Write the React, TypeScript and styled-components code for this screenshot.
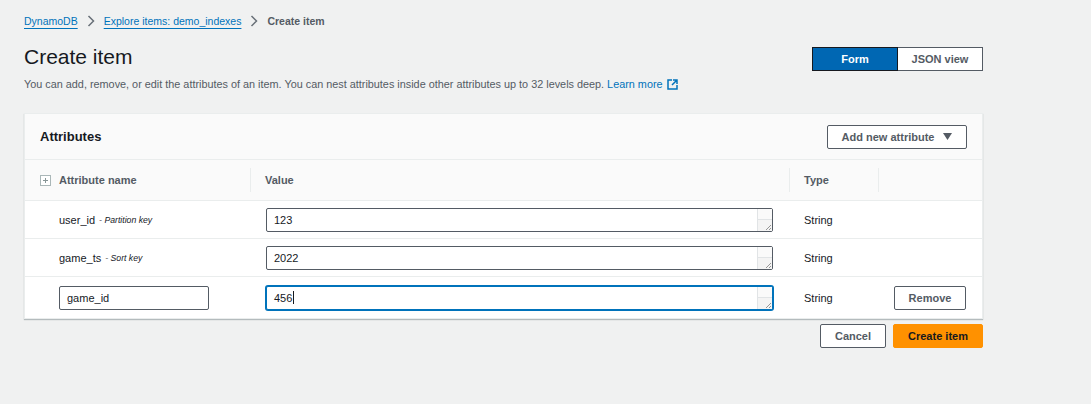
import React from "react";
import styled, { createGlobalStyle } from "styled-components";

const GlobalStyle = createGlobalStyle`
  html, body { margin: 0; padding: 0; }
  body {
    background: #f0f1f1;
    font-family: "Liberation Sans", Arial, sans-serif;
    color: #16191f;
  }
  * { box-sizing: border-box; }
`;

const Page = styled.div`
  width: 983px;
  padding: 13px 0 0 24px;
`;

const Crumbs = styled.nav`
  display: flex;
  align-items: center;
  gap: 9px;
  font-size: 10.5px;
  height: 16px;
`;

const CrumbLink = styled.a`
  color: #0073bb;
  text-decoration: underline;
  text-underline-offset: 3px;
`;

const CrumbCurrent = styled.span`
  color: #545b64;
  font-weight: 700;
`;

const Chevron = () => (
  <svg width="8" height="12" viewBox="0 0 8 12">
    <path d="M1.5 1 L6.5 6 L1.5 11" fill="none" stroke="#687078" strokeWidth="1.5" />
  </svg>
);

const HeaderRow = styled.div`
  display: flex;
  justify-content: space-between;
  align-items: flex-start;
  margin-top: 14px;
`;

const TitleBlock = styled.div`
  display: flex;
  flex-direction: column;
`;

const Title = styled.h1`
  margin: 0;
  font-size: 21px;
  font-weight: 400;
  line-height: 28px;
  color: #16191f;
`;

const Description = styled.p`
  margin: 7px 0 0;
  font-size: 10.85px;
  color: #545b64;
  display: flex;
  align-items: center;
  gap: 3px;
`;

const LearnLink = styled.a`
  color: #0073bb;
  display: inline-flex;
  align-items: center;
  gap: 4px;
`;

const Segmented = styled.div`
  display: flex;
  margin-top: 4px;
`;

const SegButton = styled.button<{ $active?: boolean }>`
  width: ${(p) => (p.$active ? "86px" : "85px")};
  height: 24px;
  font-family: inherit;
  font-size: 11px;
  font-weight: 700;
  border: 1px solid ${(p) => (p.$active ? "#16191f" : "#545b64")};
  ${(p) => (!p.$active ? "border-left: none;" : "")}
  background: ${(p) => (p.$active ? "#0067b3" : "#ffffff")};
  color: ${(p) => (p.$active ? "#ffffff" : "#545b64")};
  padding: 0;
`;

const Panel = styled.section`
  margin-top: 23px;
  background: #ffffff;
  border: 1px solid #eaeded;
  box-shadow: 0 1px 1px rgba(0, 28, 36, 0.25);
`;

const PanelHeader = styled.div`
  display: flex;
  align-items: center;
  justify-content: space-between;
  height: 46px;
  padding: 0 15px;
  background: #fafafa;
  border-bottom: 1px solid #eaeded;
`;

const PanelTitle = styled.h2`
  margin: 0;
  font-size: 13px;
  font-weight: 700;
  color: #16191f;
`;

const OutlineButton = styled.button<{ $w: number }>`
  width: ${(p) => p.$w}px;
  height: 24px;
  background: #ffffff;
  border: 1px solid #545b64;
  border-radius: 2px;
  font-family: inherit;
  font-size: 11px;
  font-weight: 700;
  color: #545b64;
  display: inline-flex;
  align-items: center;
  justify-content: center;
  gap: 9px;
  padding: 0;
`;

const PrimaryButton = styled.button`
  width: 90px;
  height: 24px;
  background: #ff9100;
  border: 1px solid #ff9100;
  border-radius: 2px;
  font-family: inherit;
  font-size: 11px;
  font-weight: 700;
  color: #16191f;
  padding: 0;
`;

const Table = styled.div`
  display: grid;
  grid-template-columns: 225px 539px 89px 1fr;
`;

const HeadCell = styled.div<{ $divider?: boolean; $pad?: number }>`
  height: 41px;
  background: #fafafa;
  border-bottom: 1px solid #eaeded;
  display: flex;
  align-items: center;
  gap: 8px;
  padding-left: ${(p) => p.$pad ?? 15}px;
  font-size: 11px;
  font-weight: 700;
  color: #545b64;
  position: relative;
  &::before {
    content: "";
    display: ${(p) => (p.$divider ? "block" : "none")};
    position: absolute;
    left: 0;
    top: 8px;
    bottom: 8px;
    width: 1px;
    background: #eaeded;
  }
`;

const Cell = styled.div<{ $pad?: number; $last?: boolean; $h?: number }>`
  height: ${(p) => p.$h ?? 38}px;
  display: flex;
  align-items: center;
  padding: 0 16px 0 ${(p) => p.$pad ?? 16}px;
  border-bottom: ${(p) => (p.$last ? "none" : "1px solid #eaeded")};
  font-size: 11px;
  color: #16191f;
  gap: 4px;
`;

const KeyHint = styled.span`
  font-size: 8.7px;
  font-style: italic;
  color: #16191f;
`;

const TextBox = styled.div<{ $focus?: boolean }>`
  flex: 1;
  height: 24px;
  display: flex;
  border: 1px solid ${(p) => (p.$focus ? "#0073bb" : "#545b64")};
  box-shadow: ${(p) => (p.$focus ? "0 0 0 1px #0073bb" : "none")};
  border-radius: 2px;
  background: #ffffff;
`;

const TextValue = styled.div`
  flex: 1;
  padding: 0 7px;
  display: flex;
  align-items: center;
  font-size: 11px;
  color: #16191f;
`;

const Caret = styled.span`
  display: inline-block;
  width: 1px;
  height: 13px;
  background: #16191f;
  margin-left: 1px;
`;

const ScrollTrack = styled.div`
  width: 15px;
  border-left: 1px solid #e1e4e6;
  display: flex;
  flex-direction: column;
  background: #fafafa;
`;

const TrackTop = styled.div`
  height: 11px;
  border-bottom: 1px solid #e1e4e6;
  background: #fafafa;
`;

const TrackBottom = styled.div`
  flex: 1;
  display: flex;
  align-items: flex-end;
  justify-content: flex-end;
  background: #f4f4f4;
`;

const Grip = () => (
  <svg width="8" height="8" viewBox="0 0 8 8">
    <path d="M7 2 L2 7 M7 5 L5 7" stroke="#7d7d7d" strokeWidth="0.8" />
  </svg>
);

const NameInput = styled.div`
  width: 150px;
  height: 24px;
  border: 1px solid #545b64;
  border-radius: 2px;
  display: flex;
  align-items: center;
  padding: 0 7px;
  font-size: 11px;
  color: #16191f;
  background: #fff;
`;

const Footer = styled.div`
  display: flex;
  justify-content: flex-end;
  gap: 7px;
  margin-top: 5px;
`;

const ExpandIcon = () => (
  <svg width="11" height="11" viewBox="0 0 11 11">
    <rect x="0.5" y="0.5" width="10" height="10" fill="#fff" stroke="#aab7b8" />
    <path d="M5.5 3 V8 M3 5.5 H8" stroke="#879596" strokeWidth="1" />
  </svg>
);

const ExternalIcon = () => (
  <svg width="11" height="11" viewBox="0 0 11 11">
    <path d="M5 1 H1 V10 H10 V6" fill="none" stroke="#0073bb" strokeWidth="1.5" />
    <path d="M6 1 H10 V5 M10 1 L5 6" fill="none" stroke="#0073bb" strokeWidth="1.5" />
  </svg>
);

const Caretdown = () => (
  <svg width="9" height="7" viewBox="0 0 9 7">
    <path d="M0 0 H9 L4.5 7 Z" fill="#545b64" />
  </svg>
);

const ValueBox = ({ value, focus }: { value: string; focus?: boolean }) => (
  <TextBox $focus={focus}>
    <TextValue>
      {value}
      {focus && <Caret />}
    </TextValue>
    <ScrollTrack>
      <TrackTop />
      <TrackBottom>
        <Grip />
      </TrackBottom>
    </ScrollTrack>
  </TextBox>
);

export default function App() {
  return (
    <>
      <GlobalStyle />
      <Page>
        <Crumbs>
          <CrumbLink>DynamoDB</CrumbLink>
          <Chevron />
          <CrumbLink>Explore items: demo_indexes</CrumbLink>
          <Chevron />
          <CrumbCurrent>Create item</CrumbCurrent>
        </Crumbs>
        <HeaderRow>
          <TitleBlock>
            <Title>Create item</Title>
            <Description>
              You can add, remove, or edit the attributes of an item. You can nest attributes inside
              other attributes up to 32 levels deep.
              <LearnLink>
                Learn more <ExternalIcon />
              </LearnLink>
            </Description>
          </TitleBlock>
          <Segmented>
            <SegButton $active>Form</SegButton>
            <SegButton>JSON view</SegButton>
          </Segmented>
        </HeaderRow>
        <Panel>
          <PanelHeader>
            <PanelTitle>Attributes</PanelTitle>
            <OutlineButton $w={140}>
              Add new attribute <Caretdown />
            </OutlineButton>
          </PanelHeader>
          <Table>
            <HeadCell>
              <ExpandIcon />
              Attribute name
            </HeadCell>
            <HeadCell $divider>Value</HeadCell>
            <HeadCell $divider>Type</HeadCell>
            <HeadCell $divider />

            <Cell $pad={34}>
              user_id <KeyHint>- Partition key</KeyHint>
            </Cell>
            <Cell>
              <ValueBox value="123" />
            </Cell>
            <Cell $pad={15}>String</Cell>
            <Cell />

            <Cell $pad={34}>
              game_ts <KeyHint>- Sort key</KeyHint>
            </Cell>
            <Cell>
              <ValueBox value="2022" />
            </Cell>
            <Cell $pad={15}>String</Cell>
            <Cell />

            <Cell $pad={34} $last $h={41}>
              <NameInput>game_id</NameInput>
            </Cell>
            <Cell $last $h={41}>
              <ValueBox value="456" focus />
            </Cell>
            <Cell $pad={15} $last $h={41}>
              String
            </Cell>
            <Cell $last $h={41}>
              <OutlineButton $w={72}>Remove</OutlineButton>
            </Cell>
          </Table>
        </Panel>
        <Footer>
          <OutlineButton $w={66}>Cancel</OutlineButton>
          <PrimaryButton>Create item</PrimaryButton>
        </Footer>
      </Page>
    </>
  );
}
